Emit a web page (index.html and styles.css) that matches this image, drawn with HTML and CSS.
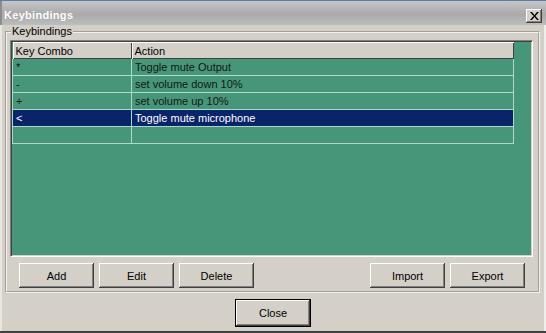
FILE: index.html
```html
<!DOCTYPE html>
<html lang="en">
<head>
    <meta charset="UTF-8">
    <title>Keybindings</title>
    <link rel="stylesheet" href="styles.css">
</head>
<body>

<div class="dialog">
    <div class="titlebar">
        <span class="title">Keybindings</span>
        <span class="close-box">
            <svg width="9" height="8" viewBox="0 0 9 8"><path d="M0 0h2l2.5 3 2.5-3h2L5.5 4 9 8H7L4.5 5 2 8H0l3.5-4z" fill="#000"/></svg>
        </span>
    </div>

    <div class="content">
        <fieldset class="group">
            <legend>Keybindings</legend>

            <div class="list">
                <table class="grid">
                    <thead>
                        <tr>
                            <th class="col-key">Key Combo</th>
                            <th class="col-action">Action</th>
                        </tr>
                    </thead>
                    <tbody>
                        <tr><td>*</td><td>Toggle mute Output</td></tr>
                        <tr><td>-</td><td>set volume down 10%</td></tr>
                        <tr><td>+</td><td>set volume up 10%</td></tr>
                        <tr class="selected"><td>&lt;</td><td>Toggle mute microphone</td></tr>
                        <tr><td></td><td></td></tr>
                    </tbody>
                </table>
            </div>

            <div class="button-row">
                <div class="button-set">
                    <button class="button">Add</button>
                    <button class="button">Edit</button>
                    <button class="button">Delete</button>
                </div>
                <div class="button-set">
                    <button class="button">Import</button>
                    <button class="button">Export</button>
                </div>
            </div>
        </fieldset>

        <div class="footer">
            <button class="button default">Close</button>
        </div>
    </div>
</div>

</body>
</html>
```

FILE: styles.css
```css
body {
    margin: 0;
    font-family: 'Liberation Sans', Arial, sans-serif;
    font-size: 11px;
    background-color: #d4d0c8;
}

.dialog {
    width: 546px;
    height: 333px;
    box-sizing: border-box;
    background-color: #d4d0c8;
    border-top: 1px solid #5a7fa8;
    border-bottom: 2px solid #404040;
    box-shadow: inset 2px 0 0 #e8e6e2, inset -2px 0 0 #f0eeea;
    display: flex;
    flex-direction: column;
}

/* Title bar */
.titlebar {
    height: 24px;
    display: flex;
    align-items: center;
    justify-content: space-between;
    padding: 0 4px 0 2px;
    background: linear-gradient(#c6c6c6, #aaaaaa 55%, #bdbdbd);
    border-left: 2px solid #8c8c8c;
}

.title {
    color: #fff;
    font-weight: bold;
    font-size: 11px;
    letter-spacing: 0.3px;
    text-shadow: 0 0 1px #9a9a9a;
    margin-top: 3px;
}

.close-box {
    width: 16px;
    height: 14px;
    margin-top: 5px;
    display: flex;
    align-items: center;
    justify-content: center;
    background-color: #d4d0c8;
    box-shadow: inset -1px -1px #404040, inset 1px 1px #fff, inset -2px -2px #808080;
}

/* Group box */
.content {
    flex: 1;
    display: flex;
    flex-direction: column;
    padding: 0 6px 0 5px;
}

.group {
    margin: 1px 0 0 0;
    padding: 3px 5px 3px 3px;
    border: 2px groove #f4f2ee;
    height: 267px;
    box-sizing: border-box;
}

.group legend {
    padding: 0 1px;
    margin-left: 1px;
    line-height: 11px;
    color: #000;
}

.list {
    height: 217px;
    box-sizing: border-box;
    background-color: #48967a;
    border: 1px solid;
    border-color: #808080 #ffffff #ffffff #808080;
    box-shadow: inset 1px 1px #404040, inset -1px -1px #d4d0c8;
    padding: 1px;
}

.grid {
    width: 502px;
    border-collapse: collapse;
    table-layout: fixed;
}

.grid th {
    height: 17px;
    padding: 0 3px;
    text-align: left;
    font-weight: normal;
    color: #000;
    background-color: #d4d0c8;
    box-shadow: inset 1px 1px #fff, inset -1px -1px #404040;
}

.grid .col-key {
    width: 113px;
}

.grid td {
    height: 16px;
    padding: 0 3px;
    color: #101810;
    border: 1px solid #a8dcc8;
    border-top: none;
}

.grid tr.selected td {
    background-color: #0a246a;
    color: #fff;
}

/* Buttons */
.button-row {
    display: flex;
    justify-content: space-between;
    margin-top: 6px;
    padding: 0 8px 0 9px;
}

.button-set {
    display: flex;
    gap: 5px;
}

.button {
    width: 75px;
    height: 25px;
    padding: 0;
    border: none;
    font-family: 'Liberation Sans', Arial, sans-serif;
    font-size: 11px;
    color: #000;
    background-color: #d4d0c8;
    box-shadow: inset -1px -1px #404040, inset 1px 1px #fff, inset -2px -2px #808080;
}

.footer {
    display: flex;
    justify-content: center;
    padding-top: 6px;
    padding-left: 1px;
}

.button.default {
    width: 76px;
    height: 28px;
    border: 1px solid #000;
}
```
